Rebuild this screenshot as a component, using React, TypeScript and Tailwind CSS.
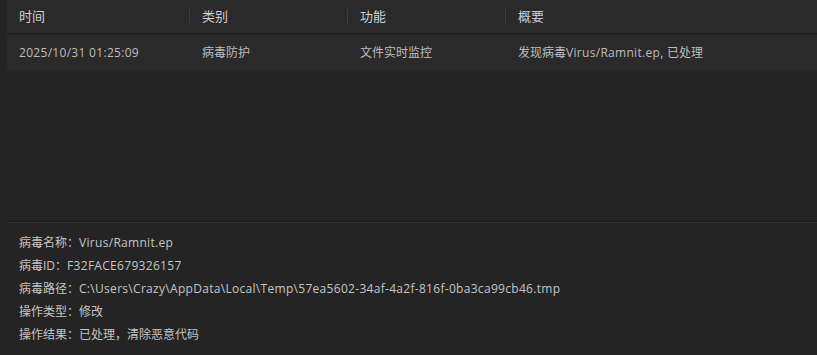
const L = ({ children }: { children: React.ReactNode }) => (
  <span className="tracking-[0.3px]">{children}</span>
)

const details: [string, React.ReactNode][] = [
  ['病毒名称：', <L>Virus/Ramnit.ep</L>],
  ['病毒ID：', <L>F32FACE679326157</L>],
  ['病毒路径：', <L>C:\Users\Crazy\AppData\Local\Temp\57ea5602-34af-4a2f-816f-0ba3ca99cb46.tmp</L>],
  ['操作类型：', '修改'],
  ['操作结果：', '已处理，清除恶意代码'],
]

export default function App() {
  return (
    <div
      className="w-[817px] h-[355px] overflow-hidden bg-[#242424] pl-[7px] text-[#c4c4c4]"
      style={{ fontFamily: '"Open Sans", "Noto Sans CJK SC", sans-serif' }}
    >
      <div className="h-[221px] flex flex-col">
        <div className="flex h-[33px] items-center bg-[#2a2a2a] text-[13px] text-[#cfcfcf]">
          <div className="w-[182px] pl-3">时间</div>
          <div className="w-[158px] flex items-center">
            <span className="h-4 w-px bg-[#3c3c3c]" />
            <span className="pl-3">类别</span>
          </div>
          <div className="w-[158px] flex items-center">
            <span className="h-4 w-px bg-[#3c3c3c]" />
            <span className="pl-3">功能</span>
          </div>
          <div className="flex-1 flex items-center">
            <span className="h-4 w-px bg-[#3c3c3c]" />
            <span className="pl-3">概要</span>
          </div>
        </div>
        <div className="h-[3px] border-t border-[#1e1e1e] bg-[#262626] border-b-[#303030]" />
        <div className="flex h-[34px] items-center bg-[#2a2a2a] text-[12px] text-[#bdbdbd]">
          <div className="w-[182px] pl-3"><L>2025/10/31 01:25:09</L></div>
          <div className="w-[158px] pl-[13px]">病毒防护</div>
          <div className="w-[158px] pl-[13px]">文件实时监控</div>
          <div className="flex-1 pl-[13px]">发现病毒<L>Virus/Ramnit.ep, </L>已处理</div>
        </div>
      </div>
      <div className="h-px bg-[#1c1c1c]" />
      <div className="h-px bg-[#333333]" />
      <div className="pl-3 pt-2 text-[12px] text-[#c4c4c4]">
        {details.map(([label, value]) => (
          <div key={label} className="h-[23px] leading-[23px]">
            {label}{value}
          </div>
        ))}
      </div>
    </div>
  )
}
